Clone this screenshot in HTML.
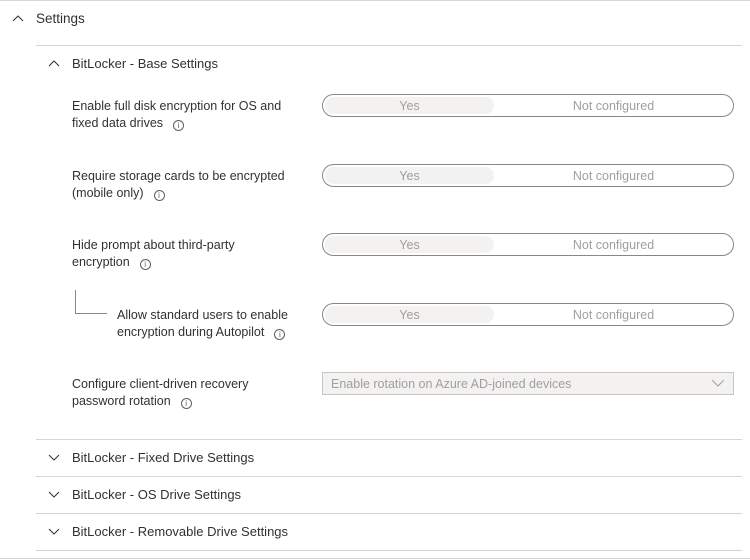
<!DOCTYPE html>
<html><head><meta charset="utf-8"><style>
*{margin:0;padding:0;box-sizing:border-box}
body{width:750px;height:560px;background:#fff;position:relative;overflow:hidden;font-family:"Liberation Sans",sans-serif;font-size:12.5px;color:#323130}
.a{position:absolute;white-space:nowrap}
.hl{position:absolute;height:1px;background:#d6d6d6}
.tg{position:absolute;left:322px;width:412px;height:23px;border:1px solid #8a8886;border-radius:12px}
.tg .y{position:absolute;left:2px;top:2px;width:169px;height:17px;background:#f3f2f1;border-radius:9px;color:#a19f9d;text-align:center;line-height:18px}
.tg .n{position:absolute;left:171px;right:0;top:0;line-height:22px;text-align:center;color:#a19f9d}
.lbl{position:absolute;left:72px;line-height:17px;white-space:nowrap}
.i{display:inline-block;width:11px;height:11px;border:1px solid #605e5c;border-radius:50%;font-size:8px;line-height:9px;text-align:center;margin-left:10px;vertical-align:-1px;color:#605e5c}
.chev{position:absolute}
</style></head><body>
<div class="hl" style="left:0;top:0;width:750px"></div>
<svg class="chev" style="left:12px;top:14px" width="12" height="8"><path d="M1 7 L6 2 L11 7" fill="none" stroke="#323130" stroke-width="1"/></svg>
<div class="a" style="left:36px;top:11px;font-size:13.5px">Settings</div>
<div class="hl" style="left:36px;top:45px;width:706px"></div>
<svg class="chev" style="left:48px;top:59px" width="12" height="8"><path d="M1 7 L6 2 L11 7" fill="none" stroke="#323130" stroke-width="1"/></svg>
<div class="a" style="left:72px;top:56px;font-size:13px">BitLocker - Base Settings</div>

<div class="lbl" style="top:98px">Enable full disk encryption for OS and<br>fixed data drives<span class="i">i</span></div>
<div class="tg" style="top:94px"><div class="y">Yes</div><div class="n">Not configured</div></div>

<div class="lbl" style="top:168px">Require storage cards to be encrypted<br>(mobile only)<span class="i">i</span></div>
<div class="tg" style="top:164px"><div class="y">Yes</div><div class="n">Not configured</div></div>

<div class="lbl" style="top:237px">Hide prompt about third-party<br>encryption<span class="i">i</span></div>
<div class="tg" style="top:233px"><div class="y">Yes</div><div class="n">Not configured</div></div>

<div style="position:absolute;left:75px;top:290px;width:1px;height:23px;background:#8a8886"></div>
<div style="position:absolute;left:75px;top:313px;width:32px;height:1px;background:#8a8886"></div>
<div class="lbl" style="left:117px;top:307px">Allow standard users to enable<br>encryption during Autopilot<span class="i">i</span></div>
<div class="tg" style="top:303px"><div class="y">Yes</div><div class="n">Not configured</div></div>

<div class="lbl" style="top:376px">Configure client-driven recovery<br>password rotation<span class="i">i</span></div>
<div style="position:absolute;left:322px;top:372px;width:412px;height:23px;background:#f3f2f1;border:1px solid #c8c6c4"></div>
<div class="a" style="left:331px;top:377px;color:#a19f9d">Enable rotation on Azure AD-joined devices</div>
<svg class="chev" style="left:711px;top:379px" width="14" height="8"><path d="M1 1 L7 7 L13 1" fill="none" stroke="#a19f9d" stroke-width="1"/></svg>

<div class="hl" style="left:36px;top:439px;width:706px"></div>
<svg class="chev" style="left:48px;top:454px" width="12" height="8"><path d="M1 1 L6 6 L11 1" fill="none" stroke="#323130" stroke-width="1"/></svg>
<div class="a" style="left:72px;top:450px;font-size:13px">BitLocker - Fixed Drive Settings</div>
<div class="hl" style="left:36px;top:476px;width:706px"></div>
<svg class="chev" style="left:48px;top:491px" width="12" height="8"><path d="M1 1 L6 6 L11 1" fill="none" stroke="#323130" stroke-width="1"/></svg>
<div class="a" style="left:72px;top:487px;font-size:13px">BitLocker - OS Drive Settings</div>
<div class="hl" style="left:36px;top:513px;width:706px"></div>
<svg class="chev" style="left:48px;top:528px" width="12" height="8"><path d="M1 1 L6 6 L11 1" fill="none" stroke="#323130" stroke-width="1"/></svg>
<div class="a" style="left:72px;top:524px;font-size:13px">BitLocker - Removable Drive Settings</div>
<div class="hl" style="left:36px;top:550px;width:706px"></div>
<div class="hl" style="left:0;top:558px;width:750px"></div>
</body></html>
